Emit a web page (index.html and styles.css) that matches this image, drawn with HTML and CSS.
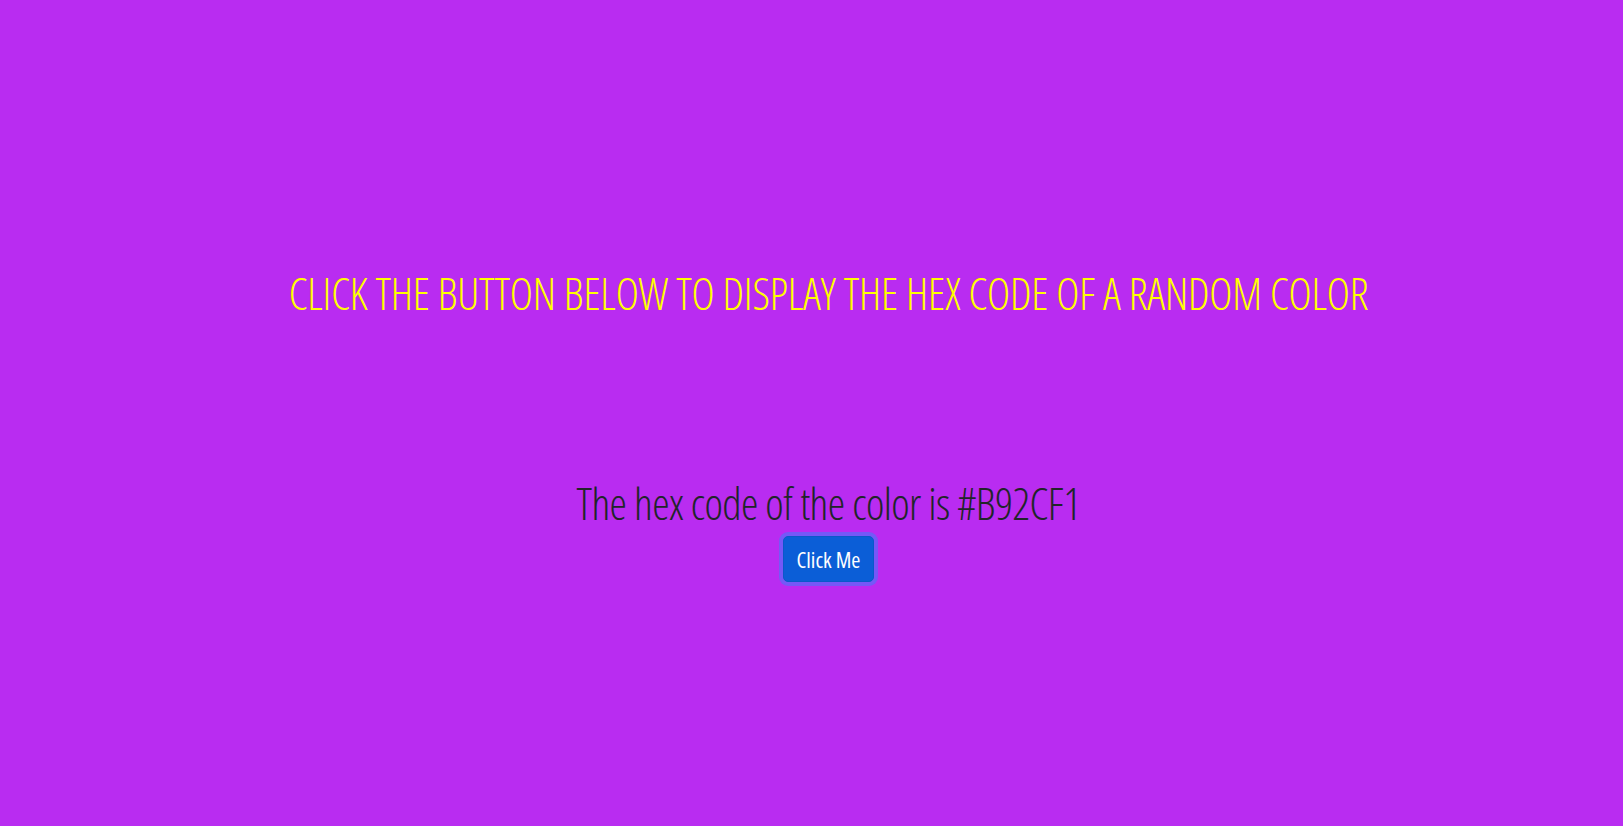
FILE: index.html
```html
<!DOCTYPE html>
<html lang="en">
<head>
<meta charset="utf-8">
<title>Random Color</title>
<link rel="stylesheet" href="styles.css">
</head>
<body>
<main class="page">
  <h1 class="title">CLICK THE BUTTON BELOW TO DISPLAY THE HEX CODE OF A RANDOM COLOR</h1>
  <section class="result">
    <h2 class="hex">The hex code of the color is #B92CF1</h2>
    <button class="btn" type="button">Click Me</button>
  </section>
</main>
</body>
</html>
```
FILE: styles.css
```css
html, body {
  margin: 0;
  padding: 0;
  background: #B92CF1;
  height: 100%;
  overflow: hidden;
}
.page {
  display: flex;
  flex-direction: column;
  align-items: center;
  padding-top: 267px;
  padding-left: 34px;
  font-family: "Open Sans", "DejaVu Sans", sans-serif;
  font-stretch: 75%;
}
.title {
  margin: 0;
  font-size: 44px;
  font-weight: 300;
  line-height: 1.2;
  letter-spacing: -0.18px;
  color: #ffff00;
  white-space: nowrap;
}
.result {
  display: flex;
  flex-direction: column;
  align-items: center;
  margin-top: 157px;
  gap: 6px;
}
.hex {
  margin: 0;
  font-size: 44px;
  font-weight: 300;
  line-height: 1.2;
  letter-spacing: -0.6px;
  color: #212529;
  white-space: nowrap;
}
.btn {
  font-family: "Open Sans", "DejaVu Sans", sans-serif;
  font-stretch: 75%;
  font-size: 22px;
  font-weight: 400;
  line-height: 28px;
  padding: 8px 13px;
  color: #ffffff;
  background: #0b5ed7;
  border: 1px solid #0a58ca;
  border-radius: 5px;
  box-shadow: 0 0 0 4px #7558f7;
}
```
